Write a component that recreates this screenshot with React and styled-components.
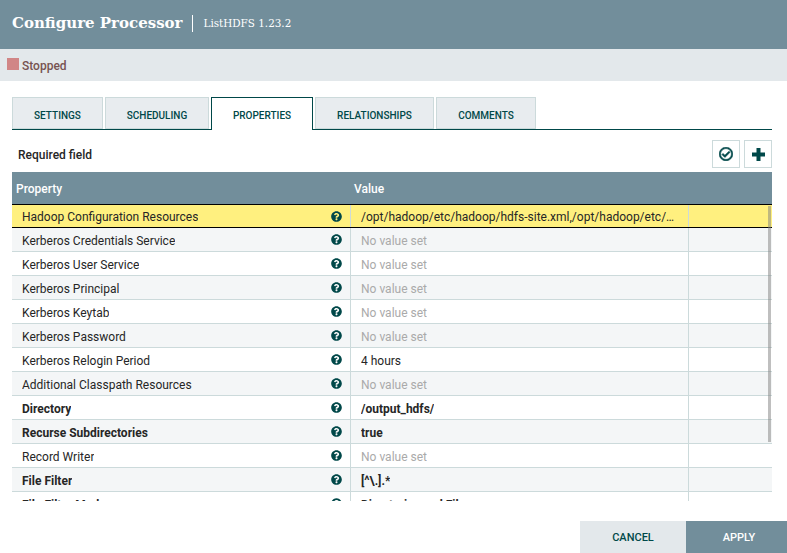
import styled, { createGlobalStyle } from "styled-components";
import { FaQuestionCircle, FaRegCheckCircle } from "react-icons/fa";

const GlobalStyle = createGlobalStyle`
  html, body {
    margin: 0;
    padding: 0;
    height: 100%;
    overflow: hidden;
    background: #fff;
    font-family: Roboto, "Liberation Sans", sans-serif;
  }
`

const Dialog = styled.div`
  width: 787px;
  height: 553px;
  display: flex;
  flex-direction: column;
  overflow: hidden;
`

const Header = styled.div`
  height: 49px;
  flex: none;
  box-sizing: border-box;
  padding: 0 0 4px 12px;
  display: flex;
  align-items: center;
  background-color: #728e9b;
  color: #fff;
`

const Title = styled.div`
  font-family: "DejaVu Serif", serif;
  font-size: 15px;
  font-weight: 700;
  line-height: 20px;
`

const Subtitle = styled.div`
  margin: 2px 0 0 10px;
  padding-left: 10px;
  border-left: 1px solid #fff;
  font-family: "DejaVu Serif", serif;
  font-size: 10.4px;
  line-height: 17px;
`

const StatusBar = styled.div`
  height: 32px;
  flex: none;
  padding-left: 7px;
  display: flex;
  align-items: center;
  gap: 3px;
  background-color: #e3e8eb;
`

const StatusSquare = styled.span`
  width: 12px;
  height: 12px;
  margin-top: -2px;
  background-color: #d18686;
`

const StatusText = styled.span`
  padding-top: 1px;
  font-size: 12px;
  font-weight: 500;
  color: #775351;
`

const Body = styled.div`
  flex: 1;
  min-height: 0;
  padding: 16px 15px 0 12px;
  display: flex;
  flex-direction: column;
`

const TabBar = styled.div`
  height: 33px;
  flex: none;
  display: flex;
  gap: 2px;
  box-sizing: border-box;
  border-bottom: 1px solid #004849;
`

const Tab = styled.div`
  width: ${(p) => p.$width}px;
  height: ${(p) => (p.$active ? 33 : 32)}px;
  box-sizing: border-box;
  padding-top: ${(p) => (p.$active ? 3 : 5)}px;
  display: flex;
  align-items: center;
  justify-content: center;
  border: 1px solid ${(p) => (p.$active ? "#004849" : "#ccdadb")};
  border-bottom: ${(p) => (p.$active ? "none" : "1px solid #ccdadb")};
  background-color: ${(p) => (p.$active ? "#fff" : "#e8ecef")};
  color: #004849;
  font-size: 10px;
  font-weight: 500;
`

const Toolbar = styled.div`
  height: 42px;
  flex: none;
  box-sizing: border-box;
  display: flex;
  align-items: flex-start;
  justify-content: space-between;
  padding: 10px 0 0 6px;
`

const RequiredLabel = styled.span`
  margin-top: 8px;
  font-size: 12px;
  line-height: 14px;
  font-weight: 500;
  color: #262626;
`

const ToolButtons = styled.div`
  display: flex;
  gap: 4px;
`

const ToolButton = styled.div`
  width: 28px;
  height: 28px;
  box-sizing: border-box;
  display: flex;
  align-items: center;
  justify-content: center;
  border: 1px solid #ccdadb;
  color: #004849;
  font-size: 14px;
`

const CheckIcon = styled(FaRegCheckCircle)`
  stroke: currentColor;
  stroke-width: 24px;
`

const Table = styled.div`
  position: relative;
  height: 329px;
  flex: none;
  overflow: hidden;
`

const HeadRow = styled.div`
  height: 32px;
  padding-top: 1px;
  box-sizing: border-box;
  display: flex;
  align-items: center;
  background-color: #728e9b;
  color: #fff;
  font-size: 12px;
  font-weight: 500;
`

const HeadName = styled.div`
  width: 338px;
  box-sizing: border-box;
  padding-left: 4px;
`

const HeadValue = styled.div`
  padding-left: 4px;
`

const Row = styled.div`
  height: 24px;
  box-sizing: border-box;
  display: flex;
  align-items: stretch;
  font-size: 12px;
  color: #262626;
  font-weight: ${(p) => (p.$required ? 700 : 400)};
  background-color: ${(p) => (p.$selected ? "#fff07f" : p.$shaded ? "#f4f6f7" : "#fff")};
  border-bottom: 1px solid ${(p) => (p.$selected ? "#000" : "#ccdadb")};
  border-top: ${(p) => (p.$selected ? "1px solid #000" : "none")};
`

const NameCell = styled.div`
  width: 338px;
  flex: none;
  box-sizing: border-box;
  padding: 0 8px 0 10px;
  display: flex;
  align-items: center;
  justify-content: space-between;
`

const CellText = styled.span`
  padding-top: 2px;
  min-width: 0;
  white-space: nowrap;
  overflow: hidden;
  text-overflow: ellipsis;
`

const HelpIcon = styled(FaQuestionCircle)`
  font-size: 11px;
  color: #004849;
`

const ValueCell = styled.div`
  width: 338px;
  flex: none;
  box-sizing: border-box;
  padding: 0 10px;
  border-left: 1px solid #ccdadb;
  display: flex;
  align-items: center;
  color: ${(p) => (p.$empty ? "#aaa" : "#262626")};
`

const ActionCell = styled.div`
  flex: 1;
  border-left: 1px solid #ccdadb;
`

const Scrollbar = styled.div`
  position: absolute;
  top: 34px;
  right: 1px;
  width: 3px;
  height: 236px;
  background-color: rgba(128, 128, 128, 0.5);
`

const Footer = styled.div`
  height: 32px;
  flex: none;
  display: flex;
  justify-content: flex-end;
`

const FooterButton = styled.div`
  width: ${(p) => p.$width}px;
  box-sizing: border-box;
  padding: 1px 0 0 ${(p) => (p.$primary ? 5 : 0)}px;
  display: flex;
  align-items: center;
  justify-content: center;
  font-size: 11px;
  font-weight: 500;
  background-color: ${(p) => (p.$primary ? "#728e9b" : "#e3e8eb")};
  color: ${(p) => (p.$primary ? "#fff" : "#004849")};
`

const tabs = [
  { label: "SETTINGS", width: 91 },
  { label: "SCHEDULING", width: 104 },
  { label: "PROPERTIES", width: 102, active: true },
  { label: "RELATIONSHIPS", width: 119 },
  { label: "COMMENTS", width: 100 },
];

const properties = [
  { name: "Hadoop Configuration Resources", value: "/opt/hadoop/etc/hadoop/hdfs-site.xml,/opt/hadoop/etc/hadoop/core-site.xml" },
  { name: "Kerberos Credentials Service" },
  { name: "Kerberos User Service" },
  { name: "Kerberos Principal" },
  { name: "Kerberos Keytab" },
  { name: "Kerberos Password" },
  { name: "Kerberos Relogin Period", value: "4 hours" },
  { name: "Additional Classpath Resources" },
  { name: "Directory", value: "/output_hdfs/", required: true },
  { name: "Recurse Subdirectories", value: "true", required: true },
  { name: "Record Writer" },
  { name: "File Filter", value: "[^\\.].*", required: true },
  { name: "File Filter Mode", value: "Directories and Files", required: true },
];

export default function App() {
  return (
    <Dialog>
      <GlobalStyle />
      <Header>
        <Title>Configure Processor</Title>
        <Subtitle>ListHDFS 1.23.2</Subtitle>
      </Header>
      <StatusBar>
        <StatusSquare />
        <StatusText>Stopped</StatusText>
      </StatusBar>
      <Body>
        <TabBar>
          {tabs.map((tab) => (
            <Tab key={tab.label} $width={tab.width} $active={tab.active}>
              {tab.label}
            </Tab>
          ))}
        </TabBar>
        <Toolbar>
          <RequiredLabel>Required field</RequiredLabel>
          <ToolButtons>
            <ToolButton><CheckIcon /></ToolButton>
            <ToolButton>
              <svg width="13" height="13" viewBox="0 0 13 13">
                <path d="M4.5 0h4v4.5H13v4H8.5V13h-4V8.5H0v-4h4.5z" fill="currentColor" />
              </svg>
            </ToolButton>
          </ToolButtons>
        </Toolbar>
        <Table>
          <HeadRow>
            <HeadName>Property</HeadName>
            <HeadValue>Value</HeadValue>
          </HeadRow>
          {properties.map((prop, index) => (
            <Row
              key={prop.name}
              $selected={index === 0}
              $shaded={index % 2 === 1}
              $required={prop.required}
            >
              <NameCell>
                <CellText>{prop.name}</CellText>
                <HelpIcon />
              </NameCell>
              <ValueCell $empty={!prop.value}>
                <CellText>{prop.value || "No value set"}</CellText>
              </ValueCell>
              <ActionCell />
            </Row>
          ))}
          <Scrollbar />
        </Table>
      </Body>
      <Footer>
        <FooterButton $width={106}>CANCEL</FooterButton>
        <FooterButton $width={101} $primary>APPLY</FooterButton>
      </Footer>
    </Dialog>
  );
}
